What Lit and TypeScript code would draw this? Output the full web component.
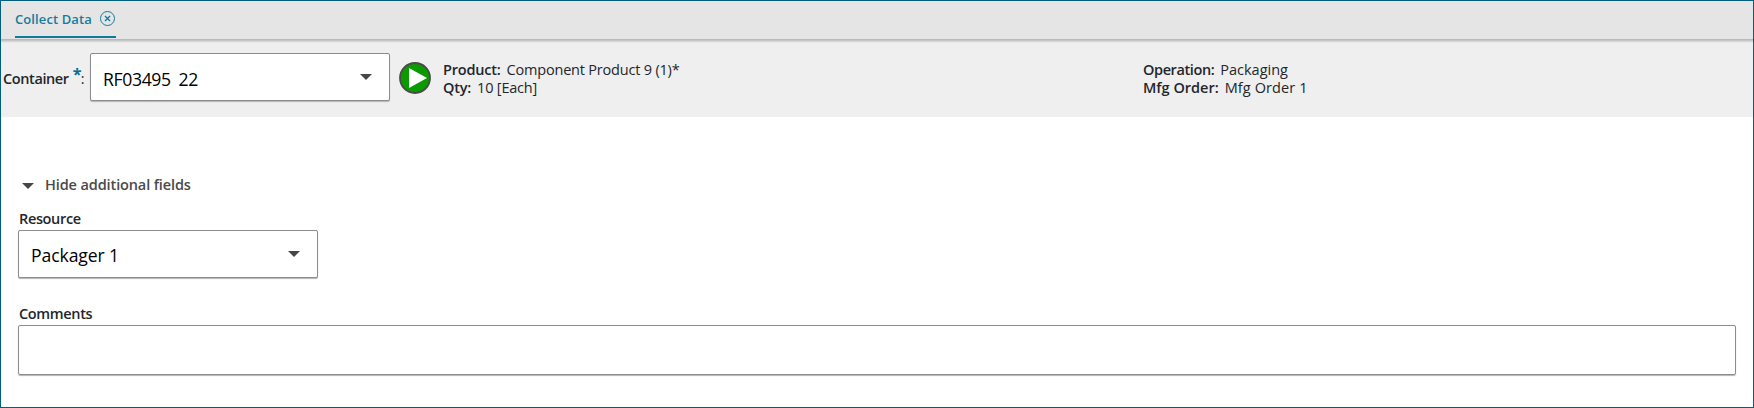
import { LitElement, html, css } from "lit";
import { customElement, property } from "lit/decorators.js";

const caret = html`<svg width="12" height="6" viewBox="0 0 12 6"><path d="M0 0H12L6 6Z" fill="#464646"/></svg>`;

@customElement("select-box")
class SelectBox extends LitElement {
  @property() value = "";

  static styles = css`
    :host {
      display: flex;
      flex: none;
      align-items: center;
      justify-content: space-between;
      box-sizing: border-box;
      width: 300px;
      height: 48px;
      padding: 0 17px 0 12px;
      background: #fff;
      border: 1px solid #8c8c8c;
      border-radius: 2px;
      box-shadow: 0 1px 1px #b4b4b4;
    }
    .value {
      font-size: 17.6px;
      line-height: 24px;
      letter-spacing: var(--value-tracking, -0.1px);
      word-spacing: var(--value-word-gap, 0);
      color: #000;
      padding-top: var(--value-drop, 2px);
    }
    svg {
      display: block;
    }
  `;

  render() {
    return html`<span class="value">${this.value}</span>${caret}`;
  }
}

@customElement("app-root")
class AppRoot extends LitElement {
  static styles = css`
    :host {
      display: block;
      box-sizing: border-box;
      height: 408px;
      border: 1px solid #005f80;
      background: #fff;
      font-family: "Open Sans", "Noto Sans", sans-serif;
      font-size: 14.5px;
      line-height: 18px;
      color: #23262b;
      overflow: hidden;
    }
    svg {
      display: block;
      flex: none;
    }
    .tabs {
      display: flex;
      height: 38px;
      padding-left: 14px;
      background: #e5e5e5;
    }
    .tab {
      display: flex;
      box-sizing: border-box;
      width: 101px;
      height: 37px;
      justify-content: space-between;
      border-bottom: 2px solid #0f7a9c;
      color: #127c9e;
      font-size: 13px;
      font-weight: 600;
      letter-spacing: 0.1px;
      padding-top: 9px;
    }
    .header {
      display: flex;
      align-items: flex-start;
      box-sizing: border-box;
      height: 78px;
      background: linear-gradient(#b9b9b9 0 1px, #c6c6c6 1px 2px, #d8d8d8 2px 3px, #e8e8e8 3px 4px, #efefef 4px);
      padding: 14px 0 0 2px;
    }
    .header select-box {
      --value-tracking: -0.35px;
      --value-word-gap: 3.5px;
      --value-drop: 4px;
    }
    .name {
      display: flex;
      flex: none;
      box-sizing: border-box;
      width: 87px;
      padding-top: 17px;
      font-weight: 600;
      letter-spacing: -0.4px;
      white-space: nowrap;
    }
    .star {
      color: #0d6c8f;
      font-size: 16px;
      font-weight: 700;
      margin: -5px 0 0 4px;
      width: 8px;
    }
    .colon {
      font-weight: 400;
    }
    .go {
      margin: 9px 12px 0 9px;
    }
    .facts {
      display: grid;
      flex: none;
      grid-auto-rows: 18px;
      width: 700px;
      padding-top: 8px;
    }
    .fact {
      display: flex;
      gap: 6px;
      letter-spacing: -0.2px;
      white-space: pre;
    }
    .facts + .facts {
      width: auto;
    }
    .fact b {
      font-weight: 600;
    }
    .tight {
      letter-spacing: -0.4px;
    }
    .plain {
      letter-spacing: 0;
    }
    .wide {
      letter-spacing: 0.1px;
    }
    .form {
      display: flex;
      flex-direction: column;
      align-items: stretch;
      padding: 59px 17px 0;
      font-weight: 600;
    }
    .toggle {
      display: flex;
      align-items: center;
      gap: 11px;
      padding-left: 4px;
      color: #4a4a4a;
      letter-spacing: -0.12px;
    }
    .toggle svg {
      margin-top: 2px;
    }
    .label {
      padding-left: 1px;
      letter-spacing: -0.35px;
      margin: 16px 0 2px;
    }
    .label.second {
      margin-top: 27px;
    }
    select-box {
      font-weight: 400;
    }
    .comments {
      box-sizing: border-box;
      height: 50px;
      border: 1px solid #8c8c8c;
      border-radius: 2px;
      box-shadow: 0 1px 1px #b4b4b4;
    }
  `;

  render() {
    return html`
      <div class="tabs">
        <div class="tab">
          <span>Collect Data</span>
          <svg width="16" height="16" viewBox="0 0 16 16" fill="none" stroke="#127c9e">
            <circle cx="7.5" cy="8.5" r="7" />
            <path d="M5 6L10 11M10 6L5 11" stroke-width="1.4" />
          </svg>
        </div>
      </div>
      <div class="header">
        <div class="name"><span>Container</span><span class="star">*</span><span class="colon">:</span></div>
        <select-box value="RF03495 22"></select-box>
        <svg class="go" width="32" height="32" viewBox="0 0 32 32">
          <circle cx="16" cy="16" r="15" fill="#0b9a00" stroke="#4a4a4a" stroke-width="1.8" />
          <path d="M10 6V26L28 16Z" fill="#fff" />
        </svg>
        <div class="facts">
          <div class="fact"><b>Product:</b><span>Component Product 9 (1)*</span></div>
          <div class="fact"><b>Qty:</b><span>10 [Each]</span></div>
        </div>
        <div class="facts">
          <div class="fact"><b class="tight">Operation:</b><span class="plain">Packaging</span></div>
          <div class="fact"><b class="plain">Mfg Order:</b><span class="wide">Mfg Order 1</span></div>
        </div>
      </div>
      <div class="form">
        <div class="toggle">${caret}<span>Hide additional fields</span></div>
        <div class="label">Resource</div>
        <select-box value="Packager 1"></select-box>
        <div class="label second">Comments</div>
        <div class="comments"></div>
      </div>
    `;
  }
}
